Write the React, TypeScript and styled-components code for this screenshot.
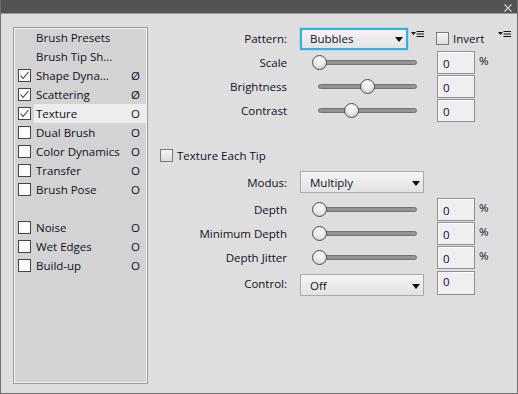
import React from "react";
import styled, { createGlobalStyle } from "styled-components";

const Global = createGlobalStyle`
  html, body { margin: 0; padding: 0; background: #dedede; }
  body { font-family: "Open Sans", "Liberation Sans", sans-serif; font-size: 11.5px; color: #10101c; }
  * { box-sizing: border-box; }
`;

const Window = styled.div`
  width: 518px;
  height: 394px;
  display: flex;
  flex-direction: column;
  background: #dedede;
  border: 1px solid #6f6f6f;
  border-top: none;
`;

const TitleBar = styled.div`
  height: 14px;
  flex: none;
  background: #535353;
  border-bottom: 1px solid #9a9a9a;
  display: flex;
  justify-content: flex-end;
  align-items: flex-start;
  padding: 4px 5px 0 0;
`;

const Body = styled.div`
  flex: 1;
  display: flex;
  padding: 13px 0 9px 12px;
  min-height: 0;
`;

const Panel = styled.div`
  width: 135px;
  flex: none;
  background: #d3d3d3;
  border: 1px solid #9c9c9c;
  box-shadow: inset 1px 1px 0 #f2f2f2, inset -1px -1px 0 #f2f2f2;
  display: flex;
  flex-direction: column;
  padding: 0 1px 0 4px;
`;

const ListRow = styled.div<{ $gapBefore?: boolean }>`
  height: 19px;
  display: flex;
  align-items: center;
  margin-top: ${(p) => (p.$gapBefore ? "19px" : "0")};
`;

const BoxSlot = styled.div`
  width: 16px;
  flex: none;
  display: flex;
  align-items: center;
`;

const ListLabel = styled.div<{ $active?: boolean }>`
  flex: 1;
  height: 19px;
  display: flex;
  align-items: center;
  padding-left: 2px;
  background: ${(p) => (p.$active ? "#ededed" : "transparent")};
  white-space: nowrap;
`;

const ListText = styled.span`
  flex: 1;
`;

const Shortcut = styled.span`
  width: 15px;
  flex: none;
`;

const CheckBox = styled.div<{ $soft?: boolean }>`
  width: 13px;
  height: 13px;
  flex: none;
  border: 1px solid ${(p) => (p.$soft ? "#7a7a7a" : "#444")};
  background: ${(p) => (p.$soft ? "linear-gradient(#f6f6f6, #dcdcdc)" : "#fbfbfb")};
  display: flex;
  align-items: center;
  justify-content: center;
`;

const Right = styled.div`
  margin-left: 12px;
  display: flex;
  flex-direction: column;
  flex: 1;
`;

const Row = styled.div<{ $h: number; $mt?: number; $top?: boolean }>`
  height: ${(p) => p.$h}px;
  margin-top: ${(p) => p.$mt ?? 0}px;
  display: flex;
  align-items: ${(p) => (p.$top ? "flex-start" : "center")};
`;

const Label = styled.div<{ $mt?: number }>`
  width: 127px;
  flex: none;
  text-align: right;
  margin-right: 13px;
  margin-top: ${(p) => p.$mt ?? 0}px;
  white-space: nowrap;
`;

const Select = styled.div<{ $w: number; $focus?: boolean; $mt?: number }>`
  width: ${(p) => p.$w}px;
  height: 22px;
  flex: none;
  margin-top: ${(p) => p.$mt ?? 0}px;
  display: flex;
  align-items: center;
  justify-content: space-between;
  padding: 0 3px 0 ${(p) => (p.$focus ? 8 : 9)}px;
  border: ${(p) => (p.$focus ? "2px solid #2fb0ea" : "1px solid #a9a9a9")};
  box-shadow: ${(p) => (p.$focus ? "0 0 0 1px #bcd6e0" : "none")};
  background: linear-gradient(#f4f4f4, #e3e3e3);
`;

const Arrow = styled.span`
  width: 0;
  height: 0;
  border-left: 4.5px solid transparent;
  border-right: 4.5px solid transparent;
  border-top: 5px solid #111;
  margin-top: 2px;
`;

const SliderBox = styled.div`
  width: 124px;
  flex: none;
  height: 16px;
  display: flex;
  align-items: center;
  padding-left: 18px;
  margin-top: 1px;
`;

const Track = styled.div`
  position: relative;
  width: 99px;
  height: 5px;
  border-radius: 3px;
  background: #939393;
  border: 1px solid #727272;
`;

const Thumb = styled.div`
  position: absolute;
  top: 50%;
  width: 15px;
  height: 15px;
  margin: -7.5px 0 0 -7.5px;
  border-radius: 50%;
  border: 1px solid #505050;
  background: radial-gradient(circle at 50% 30%, #fbfbfb 0%, #e6e6e6 55%, #c4c4c4 100%);
`;

const Field = styled.div`
  width: 38px;
  height: 23px;
  flex: none;
  margin-left: 13px;
  border: 1px solid #909090;
  box-shadow: inset 1px 1px 0 #ffffff;
  background: #efefef;
  color: #22004a;
  padding: 2px 0 0 5px;
  display: flex;
  align-items: center;
`;

const TopField = styled(Field)`
  height: 24px;
  align-items: flex-start;
  padding-top: 2px;
`;

const Unit = styled.span`
  margin-left: 4px;
  padding-bottom: 4px;
`;

const MenuBtn = styled.svg<{ $ml: number }>`
  flex: none;
  margin-left: ${(p) => p.$ml}px;
  margin-top: -9px;
`;

const InlineCheck = styled.div<{ $ml: number }>`
  display: flex;
  align-items: center;
  gap: 4px;
  margin-left: ${(p) => p.$ml}px;
`;

const Check = () => (
  <svg width="11" height="11" viewBox="0 0 11 11">
    <path d="M1.5 5.5 L4 8.5 L9.5 2" fill="none" stroke="#3a3a3a" strokeWidth="1.1" />
  </svg>
);

const Menu = ({ ml }: { ml: number }) => (
  <MenuBtn $ml={ml} width="13" height="7" viewBox="0 0 13 7">
    <polygon points="0,1 5,1 2.5,4" fill="#111" />
    <rect x="5.5" y="0" width="7.5" height="1" fill="#111" />
    <rect x="5.5" y="2.5" width="7.5" height="1" fill="#111" />
    <rect x="5.5" y="5" width="7.5" height="1" fill="#111" />
  </MenuBtn>
);

const CloseX = () => (
  <svg width="8" height="8" viewBox="0 0 8 8">
    <path d="M0.5 0.5 L7.5 7.5 M7.5 0.5 L0.5 7.5" stroke="#d4d4d4" strokeWidth="1.2" />
  </svg>
);

const Slider = ({ value }: { value: number }) => (
  <SliderBox>
    <Track>
      <Thumb style={{ left: `${value * 100}%` }} />
    </Track>
  </SliderBox>
);

type Item = { label: string; check?: boolean | null; key?: string; active?: boolean; gap?: boolean };

const items: Item[] = [
  { label: "Brush Presets", check: null },
  { label: "Brush Tip Sh...", check: null },
  { label: "Shape Dyna...", check: true, key: "Ø" },
  { label: "Scattering", check: true, key: "Ø" },
  { label: "Texture", check: true, key: "O", active: true },
  { label: "Dual Brush", check: false, key: "O" },
  { label: "Color Dynamics", check: false, key: "O" },
  { label: "Transfer", check: false, key: "O" },
  { label: "Brush Pose", check: false, key: "O" },
  { label: "Noise", check: false, key: "O", gap: true },
  { label: "Wet Edges", check: false, key: "O" },
  { label: "Build-up", check: false, key: "O" },
];

export default function App() {
  return (
    <>
      <Global />
      <Window>
        <TitleBar>
          <CloseX />
        </TitleBar>
        <Body>
          <Panel>
            {items.map((it) => (
              <ListRow key={it.label} $gapBefore={it.gap}>
                <BoxSlot>
                  {it.check !== null && it.check !== undefined && (
                    <CheckBox>{it.check && <Check />}</CheckBox>
                  )}
                </BoxSlot>
                <ListLabel $active={it.active}>
                  <ListText>{it.label}</ListText>
                  <Shortcut>{it.key ?? ""}</Shortcut>
                </ListLabel>
              </ListRow>
            ))}
          </Panel>
          <Right>
            <Row $h={23}>
              <Label>Pattern:</Label>
              <Select $w={108} $focus>
                <span>Bubbles</span>
                <Arrow />
              </Select>
              <Menu ml={3} />
              <InlineCheck $ml={12}>
                <CheckBox $soft />
                <span>Invert</span>
              </InlineCheck>
              <Menu ml={14} />
            </Row>
            <Row $h={24}>
              <Label>Scale</Label>
              <Slider value={0} />
              <Field>0</Field>
              <Unit>%</Unit>
            </Row>
            <Row $h={24}>
              <Label>Brightness</Label>
              <Slider value={0.5} />
              <Field>0</Field>
            </Row>
            <Row $h={24}>
              <Label>Contrast</Label>
              <Slider value={0.34} />
              <Field>0</Field>
            </Row>
            <Row $h={18} $mt={24}>
              <InlineCheck $ml={0}>
                <CheckBox $soft />
                <span>Texture Each Tip</span>
              </InlineCheck>
            </Row>
            <Row $h={22} $mt={7}>
              <Label>Modus:</Label>
              <Select $w={124}>
                <span>Multiply</span>
                <Arrow />
              </Select>
            </Row>
            <Row $h={24} $mt={4}>
              <Label>Depth</Label>
              <Slider value={0} />
              <Field>0</Field>
              <Unit>%</Unit>
            </Row>
            <Row $h={24}>
              <Label>Minimum Depth</Label>
              <Slider value={0} />
              <Field>0</Field>
              <Unit>%</Unit>
            </Row>
            <Row $h={24}>
              <Label>Depth Jitter</Label>
              <Slider value={0} />
              <Field>0</Field>
              <Unit>%</Unit>
            </Row>
            <Row $h={25} $mt={2} $top>
              <Label $mt={5}>Control:</Label>
              <Select $w={124} $mt={3}>
                <span>Off</span>
                <Arrow />
              </Select>
              <TopField>0</TopField>
            </Row>
          </Right>
        </Body>
      </Window>
    </>
  );
}
